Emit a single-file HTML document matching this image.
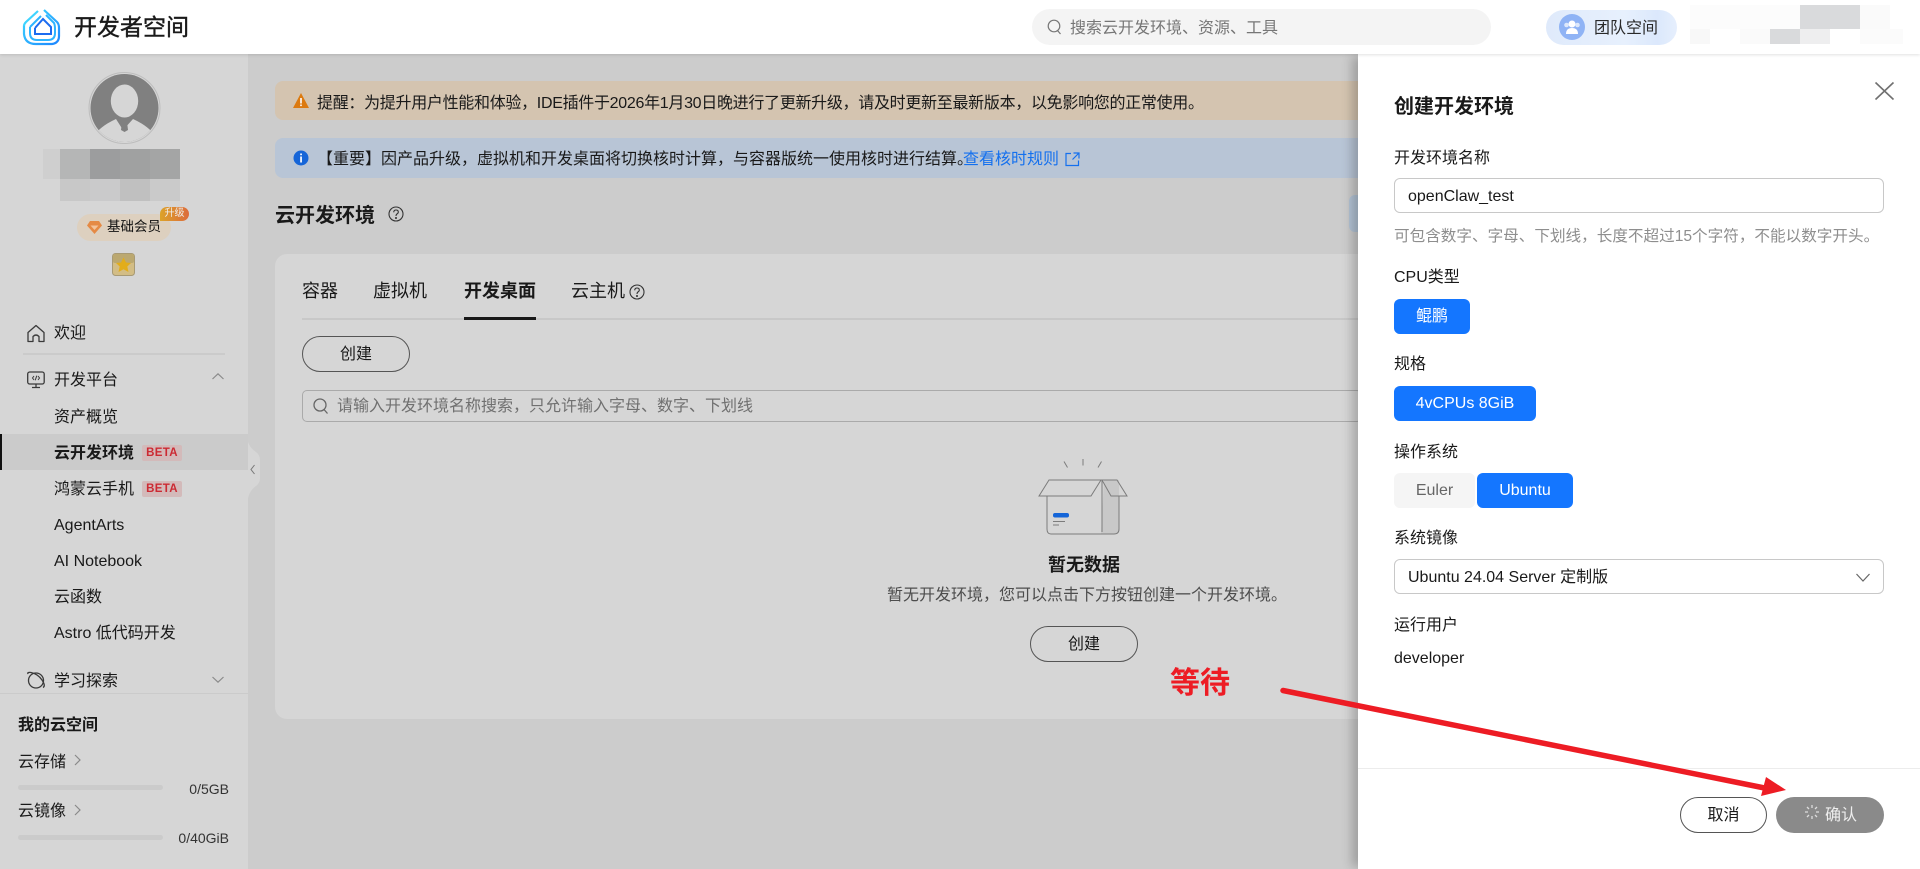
<!DOCTYPE html>
<html lang="zh-CN"><head><meta charset="utf-8"><title>开发者空间</title>
<style>
html,body{margin:0;padding:0;width:1920px;height:869px;overflow:hidden;background:#ccc}
body{position:relative;font-family:"Liberation Sans","Noto Sans CJK SC",sans-serif;font-size:16px;color:#191919}
.a{position:absolute;box-sizing:border-box}
.t{position:absolute;white-space:nowrap;line-height:20px;height:20px;margin-top:2px}
.b{font-weight:700}
.btn{position:absolute;box-sizing:border-box;border:1px solid #555;border-radius:18px;text-align:center;line-height:36px;height:36px}
.beta{position:absolute;left:142px;width:40px;height:16px;background:#d3baba;border-radius:2px;color:#cc2a33;font-size:11.5px;font-weight:700;line-height:16px;text-align:center;letter-spacing:.3px}
.opt{position:absolute;height:35px;border-radius:6px;background:#1476ff;color:#fff;text-align:center;line-height:36px}
svg{position:absolute;overflow:visible}
</style></head><body>

<!-- main bg -->
<div class="a" style="left:0;top:54px;width:248px;height:815px;background:#d6d6d6"></div>
<div class="a" style="left:248px;top:54px;width:1110px;height:815px;background:#cccccc"></div>

<!-- sidebar -->
<svg style="left:0;top:0" width="260" height="300">
 <defs><clipPath id="av"><circle cx="124.5" cy="108" r="34"/></clipPath></defs>
 <circle cx="124.5" cy="108" r="35.5" fill="none" stroke="#bdbdbd" stroke-width="1"/>
 <circle cx="124.5" cy="108" r="34" fill="#808080"/>
 <g clip-path="url(#av)">
  <ellipse cx="124.5" cy="101" rx="13.7" ry="16.5" fill="#d6d6d6"/>
  <path d="M97 132Q103 125 116 119L123 130L133 119Q146 125 152 132L152 145L97 145Z" fill="#d6d6d6"/>
  <path d="M122 122L127 122L128 130L124.500 132L121 130Z" fill="#808080"/>
 </g>
</svg>
<div class="a" style="left:43px;top:149px;width:17px;height:30px;background:#cfcfcf"></div>
<div class="a" style="left:60px;top:149px;width:30px;height:30px;background:#b5b6b6"></div>
<div class="a" style="left:90px;top:149px;width:30px;height:30px;background:#9c9d9e"></div>
<div class="a" style="left:120px;top:149px;width:30px;height:30px;background:#a0a1a1"></div>
<div class="a" style="left:150px;top:149px;width:30px;height:30px;background:#a4a5a5"></div>
<div class="a" style="left:60px;top:179px;width:30px;height:22px;background:#c8c8c8"></div>
<div class="a" style="left:90px;top:179px;width:30px;height:22px;background:#cacacb"></div>
<div class="a" style="left:120px;top:179px;width:30px;height:22px;background:#c0c0c0"></div>
<div class="a" style="left:150px;top:179px;width:30px;height:22px;background:#cacaca"></div>

<div class="a" style="left:77px;top:214px;width:94px;height:27px;border-radius:14px;background:#ddd0bf"></div>
<svg style="left:87px;top:221px" width="15" height="13"><path d="M3 0H12L15 4.500L7.500 13L0 4.500Z" fill="#e58a45"/><path d="M3.500 4.500H11.500L7.500 9Z" fill="#f3c39a"/></svg>
<div class="t" style="left:107px;top:215px;font-size:13.500px;color:#111">基础会员</div>
<div class="a" style="left:160px;top:207px;width:29px;height:14px;border-radius:8px 8px 8px 0;background:linear-gradient(90deg,#dca32a,#dc6b3c);color:#eee;font-size:10px;line-height:14px;text-align:center">升级</div>
<svg style="left:112px;top:253px" width="23" height="23">
 <rect x=".5" y=".5" width="22" height="22" rx="3" fill="#d3bd85" stroke="#a89a74"/><rect x="1" y="1" width="21" height="9" rx="2" fill="#bba870"/>
 <path d="M11.500 4.500L14 9.500L19 10L15.300 13.500L16.500 19L11.500 16.200L6.500 19L7.700 13.500L4 10L9 9.500Z" fill="#e2ad1a"/>
</svg>

<svg style="left:27px;top:324px" width="20" height="20" fill="none" stroke="#3a3a3a" stroke-width="1.300"><path d="M1 8.500L9 1.500L17 8.500V17.500H12V12.500Q9 9.500 6 12.500V17.500H1Z" stroke-linejoin="round"/></svg>
<div class="t" style="left:54px;top:322px">欢迎</div>
<div class="a" style="left:23px;top:353px;width:202px;height:2px;background:#cbcbcb"></div>
<svg style="left:27px;top:371px" width="20" height="20" fill="none" stroke="#3a3a3a" stroke-width="1.300"><rect x=".7" y="1" width="16.500" height="12" rx="2"/><path d="M5 16.500H13M9 13V16.500" /><path d="M7 5L5.500 7L7 9M11 5L12.500 7L11 9M9.800 4.700L8.200 9.300" stroke-width="1"/></svg>
<div class="t" style="left:54px;top:369px">开发平台</div>
<svg style="left:212px;top:373px" width="12" height="7" fill="none" stroke="#8a8a8a" stroke-width="1.200"><path d="M.5 6L6 .8L11.500 6"/></svg>
<div class="t" style="left:54px;top:406px">资产概览</div>
<div class="a" style="left:0;top:434px;width:248px;height:36px;background:#cbcbcb"></div>
<div class="a" style="left:0;top:434px;width:2px;height:36px;background:#111"></div>
<div class="t b" style="left:54px;top:442px">云开发环境</div>
<div class="beta" style="top:445px">BETA</div>
<div class="t" style="left:54px;top:478px">鸿蒙云手机</div>
<div class="beta" style="top:481px">BETA</div>
<div class="t" style="left:54px;top:514px">AgentArts</div>
<div class="t" style="left:54px;top:550px">AI Notebook</div>
<div class="t" style="left:54px;top:586px">云函数</div>
<div class="t" style="left:54px;top:622px">Astro 低代码开发</div>
<svg style="left:27px;top:671px" width="20" height="20" fill="none" stroke="#3a3a3a" stroke-width="1.300"><circle cx="9" cy="9.500" r="7.500"/><path d="M1 3Q0 1 4 1.500Q11 3 15 9Q19 15 16 16.500" /></svg>
<div class="t" style="left:54px;top:670px">学习探索</div>
<svg style="left:212px;top:676px" width="12" height="7" fill="none" stroke="#8a8a8a" stroke-width="1.200"><path d="M.5 1L6 6.200L11.500 1"/></svg>
<div class="a" style="left:0;top:693px;width:248px;height:176px;background:#d6d6d6;border-top:1px solid #cbcbcb"></div>
<div class="t b" style="left:18px;top:714px">我的云空间</div>
<div class="t" style="left:18px;top:751px">云存储</div>
<svg style="left:74px;top:754px" width="7" height="12" fill="none" stroke="#8a8a8a" stroke-width="1.200"><path d="M1 1L6 6L1 11"/></svg>
<div class="a" style="left:18px;top:785px;width:145px;height:5px;border-radius:3px;background:#cbcbcb"></div>
<div class="t" style="right:1691px;top:777px;font-size:14px;color:#333">0/5GB</div>
<div class="t" style="left:18px;top:800px">云镜像</div>
<svg style="left:74px;top:804px" width="7" height="12" fill="none" stroke="#8a8a8a" stroke-width="1.200"><path d="M1 1L6 6L1 11"/></svg>
<div class="a" style="left:18px;top:835px;width:145px;height:5px;border-radius:3px;background:#cbcbcb"></div>
<div class="t" style="right:1691px;top:826px;font-size:14px;color:#333">0/40GiB</div>

<!-- collapse handle -->
<svg style="left:248px;top:442px" width="12" height="56"><path d="M0 0Q2 6 8 10Q12 13 12 18V36Q12 41 8 44Q2 48 0 56Z" fill="#d6d6d6"/><path d="M6.500 23L3 27.500L6.500 32" fill="none" stroke="#777" stroke-width="1"/></svg>

<!-- alerts -->
<div class="a" style="left:275px;top:81px;width:1100px;height:39px;border-radius:8px;background:#d4c4b0"></div>
<svg style="left:293px;top:93px" width="16" height="15"><path d="M8 0L16 15H0Z" fill="#dc7a10"/><rect x="7.200" y="5" width="1.600" height="5.500" fill="#fff"/><rect x="7.200" y="11.500" width="1.600" height="1.600" fill="#fff"/></svg>
<div class="t" style="left:317px;top:92px;letter-spacing:-.3px">提醒：为提升用户性能和体验，IDE插件于2026年1月30日晚进行了更新升级，请及时更新至最新版本，以免影响您的正常使用。</div>
<div class="a" style="left:275px;top:138px;width:1100px;height:40px;border-radius:8px;background:#b8c5d6"></div>
<svg style="left:293px;top:150px" width="16" height="16"><circle cx="8" cy="8" r="7.500" fill="#1565d8"/><rect x="7.200" y="6.500" width="1.700" height="6" fill="#fff"/><rect x="7.200" y="3.500" width="1.700" height="1.700" fill="#fff"/></svg>
<div class="t" style="left:317px;top:148px">【重要】因产品升级，虚拟机和开发桌面将切换核时计算，与容器版统一使用核时进行结算。</div>
<div class="t" style="left:963px;top:148px;color:#1470ee">查看核时规则</div>
<svg style="left:1065px;top:152px" width="15" height="15" fill="none" stroke="#1470ee" stroke-width="1.200"><path d="M6 1.500H1V13.500H13.500V8.500M8.500 1H14V6.500M14 1L7.500 7.500"/></svg>

<!-- title -->
<div class="t b" style="left:275px;top:204px;font-size:20px;margin-top:2px">云开发环境</div>
<svg style="left:388px;top:206px" width="16" height="16" fill="none" stroke="#333" stroke-width="1.100"><circle cx="8" cy="8" r="7"/><path d="M5.700 6.300Q5.800 4 8 4Q10.300 4 10.300 6Q10.300 7.200 8.900 8Q8 8.600 8 10"/><circle cx="8" cy="12" r=".5"/></svg>
<div class="a" style="left:1349px;top:195px;width:12px;height:37px;border-radius:6px 0 0 6px;background:#b4c4d6"></div>

<!-- card -->
<div class="a" style="left:275px;top:254px;width:1100px;height:465px;border-radius:12px;background:#d6d6d6"></div>
<div class="t" style="left:302px;top:281px;font-size:18px;margin-top:0">容器</div>
<div class="t" style="left:373px;top:281px;font-size:18px;margin-top:0">虚拟机</div>
<div class="t b" style="left:464px;top:281px;font-size:18px;margin-top:0">开发桌面</div>
<div class="t" style="left:571px;top:281px;font-size:18px;margin-top:0">云主机</div>
<svg style="left:629px;top:284px" width="16" height="16" fill="none" stroke="#333" stroke-width="1.100"><circle cx="8" cy="8" r="7"/><path d="M5.700 6.300Q5.800 4 8 4Q10.300 4 10.300 6Q10.300 7.200 8.900 8Q8 8.600 8 10"/><circle cx="8" cy="12" r=".5"/></svg>
<div class="a" style="left:302px;top:318px;width:1060px;height:2px;background:#c8c8c8"></div>
<div class="a" style="left:464px;top:317px;width:72px;height:3px;background:#191919"></div>
<div class="btn" style="left:302px;top:336px;width:108px">创建</div>
<div class="a" style="left:302px;top:390px;width:1060px;height:32px;border:1px solid #aaa;border-radius:5px"></div>
<svg style="left:313px;top:398px" width="16" height="17" fill="none" stroke="#666" stroke-width="1.300"><circle cx="7" cy="7" r="6"/><path d="M11 11.500L14.500 15.500"/></svg>
<div class="t" style="left:337px;top:395px;color:#707070">请输入开发环境名称搜索，只允许输入字母、数字、下划线</div>

<!-- empty -->
<svg style="left:1038px;top:458px" width="90" height="80" fill="none" stroke="#7c7c7c" stroke-width="1">
 <path d="M26 3.500L29.500 9.500M45 1V7.500M63.500 3.500L60 9.500"/>
 <path d="M66 22H81V70Q81 76 76 76H63Z" fill="#c8c8c8" stroke="none"/>
 <path d="M9 38V71Q9 76 13 76H76Q81 76 81 71V38M64 22V74"/>
 <path d="M11 22H63L53 38H1Z" />
 <path d="M64 22H79L89 38H73Z"/>
 <rect x="15" y="55" width="16" height="4.500" rx="2" fill="#1565d8" stroke="none"/>
 <path d="M15 63.500H27M15 67H21"/>
</svg>
<div class="t b" style="left:1048px;top:555px;font-size:18px;margin-top:0">暂无数据</div>
<div class="t" style="left:887px;top:584px;color:#4d4d4d">暂无开发环境，您可以点击下方按钮创建一个开发环境。</div>
<div class="btn" style="left:1030px;top:626px;width:108px">创建</div>

<!-- drawer -->
<div class="a" style="left:1358px;top:54px;width:562px;height:815px;background:#fff;box-shadow:-8px 0 10px -2px rgba(0,0,0,.22)"></div>
<svg style="left:1875px;top:82px" width="19" height="18" fill="none" stroke="#707070" stroke-width="1.600"><path d="M.5 .5L18.500 17.500M18.500 .5L.5 17.500"/></svg>
<div class="t b" style="left:1394px;top:95px;font-size:20px">创建开发环境</div>
<div class="t" style="left:1394px;top:147px">开发环境名称</div>
<div class="a" style="left:1394px;top:178px;width:490px;height:35px;border:1px solid #c8c8c8;border-radius:6px"></div>
<div class="t" style="left:1408px;top:185px">openClaw_test</div>
<div class="t" style="left:1394px;top:225px;color:#8e8e8e;font-size:15.6px">可包含数字、字母、下划线，长度不超过15个字符，不能以数字开头。</div>
<div class="t" style="left:1394px;top:266px">CPU类型</div>
<div class="opt" style="left:1394px;top:299px;width:76px">鲲鹏</div>
<div class="t" style="left:1394px;top:353px">规格</div>
<div class="opt" style="left:1394px;top:386px;width:142px">4vCPUs 8GiB</div>
<div class="t" style="left:1394px;top:441px">操作系统</div>
<div class="opt" style="left:1394px;top:473px;width:81px;background:#f5f5f5;color:#666">Euler</div>
<div class="opt" style="left:1477px;top:473px;width:96px">Ubuntu</div>
<div class="t" style="left:1394px;top:527px">系统镜像</div>
<div class="a" style="left:1394px;top:559px;width:490px;height:35px;border:1px solid #c8c8c8;border-radius:6px"></div>
<div class="t" style="left:1408px;top:566px">Ubuntu 24.04 Server 定制版</div>
<svg style="left:1856px;top:573px" width="14" height="9" fill="none" stroke="#666" stroke-width="1.200"><path d="M.5 1L7 8L13.500 1"/></svg>
<div class="t" style="left:1394px;top:614px">运行用户</div>
<div class="t" style="left:1394px;top:647px">developer</div>
<div class="a" style="left:1358px;top:768px;width:562px;height:1px;background:#ececec"></div>
<div class="btn" style="left:1680px;top:797px;width:87px">取消</div>
<div class="a" style="left:1776px;top:797px;width:108px;height:36px;border-radius:18px;background:#8a8a8a"></div>
<svg style="left:1805px;top:805px" width="14" height="14" stroke="#ddd" stroke-width="1.300" fill="none"><path d="M7 0V3M7 11V14M0 7H3M11 7H14M2 2L4 4M10 10L12 12M2 12L4 10M10 4L12 2"/></svg>
<div class="t" style="left:1825px;top:804px;color:#eee">确认</div>

<!-- header -->
<div class="a" style="left:0;top:0;width:1920px;height:54px;background:#fff;box-shadow:0 1px 3px rgba(0,0,0,.12)"></div>
<svg style="left:24px;top:9px" width="38" height="37" fill="none">
 <defs><linearGradient id="lg" x1="0" y1="0" x2="1" y2="1"><stop offset="0" stop-color="#3fdcff"/><stop offset="1" stop-color="#1c86ff"/></linearGradient></defs>
 <path d="M0 17Q0 15 2 13L14 2" stroke="#3fd4ff" stroke-width="2.200"/>
 <path d="M20 1L33 13Q35 15 35 19V27Q35 34 28 35H12Q1 35 0 25V17" stroke="url(#lg)" stroke-width="2.200"/>
 <path d="M6 18L17 7M22 6L30 14Q31 16 31 20V24Q31 31 24 31H13Q6 31 6 24V18" stroke="#2db4ff" stroke-width="2"/>
 <path d="M11 19L19 10L27 18V25H11V19" stroke="#1c6cf0" stroke-width="2"/>
</svg>
<div class="t" style="left:74px;top:15px;font-size:23px;line-height:24px;height:24px;margin-top:0;color:#1a1a1a;-webkit-text-stroke:.4px #1a1a1a">开发者空间</div>
<div class="a" style="left:1032px;top:9px;width:459px;height:36px;border-radius:18px;background:#f4f4f4"></div>
<svg style="left:1047px;top:19px" width="15" height="17" fill="none" stroke="#777" stroke-width="1.200"><circle cx="7" cy="7" r="5.800"/><path d="M10.500 11.500L13.500 15"/></svg>
<div class="t" style="left:1070px;top:17px;color:#767676">搜索云开发环境、资源、工具</div>
<div class="a" style="left:1546px;top:10px;width:131px;height:35px;border-radius:18px;background:linear-gradient(90deg,#dfeafb,#e7f0fd 60%,#dbe8fc 85%,#e6effd)"></div>
<svg style="left:1559px;top:14px" width="26" height="26"><circle cx="13" cy="13" r="13" fill="#8fb3f5"/><circle cx="13" cy="10" r="3.500" fill="#fff"/><path d="M7 20Q7 14 13 14Q19 14 19 20Z" fill="#fff"/><circle cx="7.500" cy="11" r="2.300" fill="#dde8fb"/><circle cx="18.500" cy="11" r="2.300" fill="#dde8fb"/></svg>
<div class="t" style="left:1594px;top:17px;color:#2a2a2a">团队空间</div>
<div class="a" style="left:1690px;top:5px;width:110px;height:24px;background:#fcfcfc"></div>
<div class="a" style="left:1800px;top:5px;width:60px;height:24px;background:#d9dadc"></div>
<div class="a" style="left:1860px;top:5px;width:30px;height:24px;background:#fafafa"></div>
<div class="a" style="left:1690px;top:29px;width:20px;height:15px;background:#f8f8f8"></div>
<div class="a" style="left:1740px;top:29px;width:30px;height:15px;background:#fafafa"></div>
<div class="a" style="left:1770px;top:29px;width:30px;height:15px;background:#d9dadc"></div>
<div class="a" style="left:1800px;top:29px;width:30px;height:15px;background:#eeeeef"></div>
<div class="a" style="left:1860px;top:29px;width:43px;height:15px;background:#fbfbfb"></div>

<!-- annotation -->
<div class="t b" style="left:1170px;top:666px;font-size:30px;line-height:32px;height:32px;color:#ed1c24">等待</div>
<svg style="left:0;top:0" width="1920" height="869">
 <path d="M1283 690.500L1772 789.500" stroke="#ed1c24" stroke-width="5.500" stroke-linecap="round"/>
 <path d="M1766 777L1786 790L1761 796Z" fill="#ed1c24"/>
</svg>
</body></html>
